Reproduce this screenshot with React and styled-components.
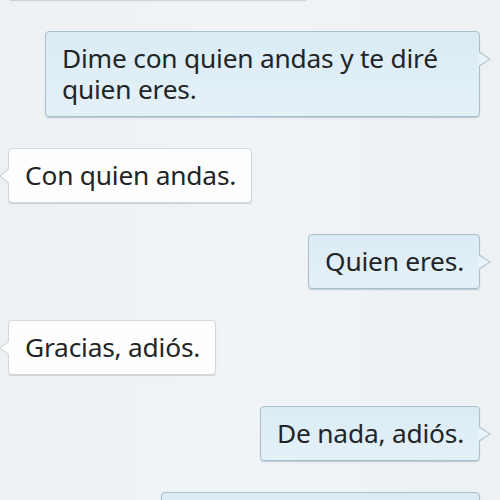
import styled, { createGlobalStyle, css } from "styled-components";

const Global = createGlobalStyle`
  html, body {
    margin: 0;
    padding: 0;
  }
  body {
    width: 500px;
    height: 500px;
    overflow: hidden;
    background: #eef2f4;
    font-family: "Noto Sans", "Open Sans", sans-serif;
  }
`;

const Thread = styled.div`
  width: 500px;
  height: 500px;
  box-sizing: border-box;
  overflow: hidden;
  display: flex;
  flex-direction: column;
  gap: 31px;
  background: linear-gradient(90deg, #edf1f3 0%, #f1f4f6 50%, #edf1f3 100%);
`;

const Row = styled.div`
  display: flex;
  justify-content: ${(p) => (p.$mine ? "flex-end" : "flex-start")};
  padding: ${(p) => (p.$mine ? "0 20px 0 0" : "0 0 0 8px")};
  margin-top: ${(p) => p.$top || "0"};
`;

const mineStyle = css`
  background: linear-gradient(180deg, #dbecf5 0%, #e4f0f7 100%);
  border: 1px solid #a9bfcb;
  box-shadow: 0 1px 1px rgba(90, 120, 140, 0.35);
  &::before {
    right: -12px;
    border-left: 12px solid #b4c8d3;
  }
  &::after {
    right: -10px;
    border-left: 11px solid #e8f2f7;
  }
`;

const theirStyle = css`
  background: #fefefe;
  border: 1px solid #d3d8db;
  box-shadow: 0 1px 1px rgba(120, 130, 140, 0.3);
  &::before {
    left: -10px;
    border-right: 10px solid #d3d8db;
  }
  &::after {
    left: -8px;
    border-right: 9px solid #fefefe;
  }
`;

const Bubble = styled.div`
  position: relative;
  box-sizing: border-box;
  max-width: 435px;
  width: ${(p) => p.$width || "auto"};
  min-height: ${(p) => p.$height || "auto"};
  padding: 11px 15px 11px 16px;
  border-radius: 4px;
  font-size: 26.3px;
  line-height: 31px;
  color: #222527;
  letter-spacing: -0.2px;
  ${(p) => (p.$mine ? mineStyle : theirStyle)}
  &::before,
  &::after {
    content: "";
    position: absolute;
    top: 19px;
    width: 0;
    height: 0;
    border-top: 8px solid transparent;
    border-bottom: 8px solid transparent;
  }
  &::after {
    top: 20px;
    border-top-width: 7px;
    border-bottom-width: 7px;
  }
`;

const messages = [
  { mine: true, text: "Dime con quien andas y te diré quien eres.", width: "435px" },
  { mine: false, text: "Con quien andas." },
  { mine: true, text: "Quien eres." },
  { mine: false, text: "Gracias, adiós." },
  { mine: true, text: "De nada, adiós." },
  { mine: true, text: "", width: "319px", height: "55px" },
];

export default function App() {
  return (
    <>
      <Global />
      <Thread>
        <Row $top="-62px">
          <Bubble $width="300px" $height="62px" aria-hidden="true" />
        </Row>
        {messages.map((m, i) => (
          <Row key={i} $mine={m.mine}>
            <Bubble $mine={m.mine} $width={m.width} $height={m.height}>
              {m.text}
            </Bubble>
          </Row>
        ))}
      </Thread>
    </>
  );
}
